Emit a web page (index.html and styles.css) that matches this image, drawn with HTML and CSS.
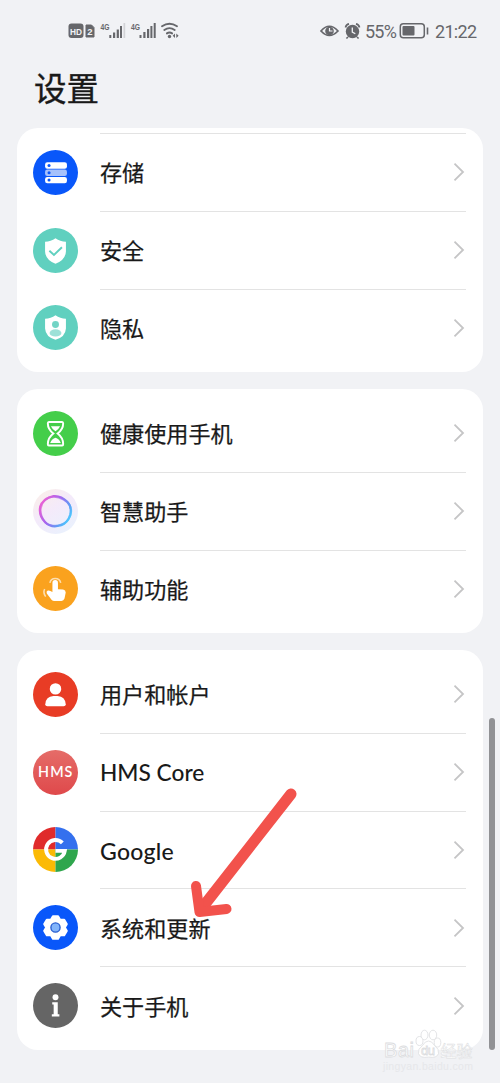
FILE: index.html
```html
<!DOCTYPE html>
<html lang="zh-CN">
<head>
<meta charset="utf-8">
<title>设置</title>
<link rel="stylesheet" href="styles.css">
</head>
<body>
<div class="screen">
  <header class="status">
    <svg class="status-left" width="112" height="22" viewBox="68 20 112 22" fill="#66676b">
      <rect x="68.500" y="23.500" width="15" height="14.500" rx="3"/>
      <text x="70" y="34.500" class="tag" textLength="12" lengthAdjust="spacingAndGlyphs" fill="#f1f2f5">HD</text>
      <path d="M86 25h5.500l2.500 2.500v9.500h-8z" stroke="#66676b" stroke-linejoin="round"/>
      <text x="87.300" y="34.500" class="tag" fill="#f1f2f5">2</text>
      <text x="100.500" y="29.500" class="net" textLength="9" lengthAdjust="spacingAndGlyphs">4G</text>
      <path d="M109.300 35h2v3h-2zM113 32.500h2.200v5.500H113zM116.700 29.500h2.200v8.500h-2.200zM120 26h2v12h-2z"/>
      <path d="M123.500 23h1.700v15h-1.700z" fill="#d2d3d6"/>
      <text x="131" y="29.500" class="net" textLength="9" lengthAdjust="spacingAndGlyphs">4G</text>
      <path d="M139.500 35h2v3h-2zM143.300 32h2.200v6h-2.200zM147 29h2.200v9H147zM150.400 26h2v12h-2zM153.700 23h2v15h-2z"/>
      <g fill="none" stroke="#66676b" stroke-width="1.900" stroke-linecap="round">
        <path d="M162 26.300q7.500-5 15 0M164.300 30q5.200-3.700 10.400 0M166.900 33.400q2.600-1.700 5.200 0"/>
      </g>
      <circle cx="169.500" cy="36.500" r="1.700"/>
      <path d="M175 33.600v4.400l-2.300-2.200zM176.300 33.600v4.400l2.300-2.200z"/>
    </svg>
    <div class="status-right">
      <svg width="42" height="22" viewBox="320 20 42 22" fill="none" stroke="#66676b">
        <path d="M321 31q8.300-9.500 17 0q-8.700 9-17 0z" stroke-width="1.700"/>
        <circle cx="329.500" cy="31" r="4.300" fill="#66676b" stroke="none"/>
        <path d="M329.500 28v3h3" stroke="#f1f2f5" stroke-width="1.200"/>
        <circle cx="352.500" cy="31.500" r="6.700" fill="#66676b" stroke="none"/>
        <path d="M345.500 27.500q.500-3 3.500-3.700M359.500 27.500q-.500-3-3.500-3.700M348 37l-1.600 1.500M357 37l1.600 1.500" stroke-width="1.700"/>
        <path d="M352.300 27.500v4.500l3 1.700" stroke="#f1f2f5" stroke-width="1.300"/>
      </svg>
      <span class="percent">55%</span>
      <svg width="30" height="22" viewBox="399 20 30 22" fill="none" stroke="#66676b">
        <rect x="400.300" y="23.800" width="24" height="14" rx="3" stroke-width="1.500"/>
        <rect x="402.500" y="26" width="12" height="9.600" rx="1" fill="#66676b" stroke="none"/>
        <path d="M427.500 27.500v7" stroke-width="1.600"/>
      </svg>
      <span class="clock">21:22</span>
    </div>
  </header>

  <h1 class="title">设置</h1>

  <main class="groups">
    <section class="card continued">
      <div class="row">
        <svg class="icon" viewBox="0 0 44 44"><circle cx="22" cy="22" r="22" fill="#0957fa"/><rect x="11.800" y="12" width="21.400" height="6.300" rx="2.200" fill="#fff"/><rect x="11.800" y="19" width="21.400" height="6.300" rx="2.200" fill="#a6c1fb"/><rect x="11.800" y="26.300" width="21.400" height="6.300" rx="2.200" fill="#fff"/><g fill="#0957fa"><circle cx="15.700" cy="15.200" r="1.500"/><circle cx="15.700" cy="22.200" r="1.500"/><circle cx="15.700" cy="29.400" r="1.500"/></g></svg>
        <div class="body"><span>存储</span><svg class="chev" viewBox="0 0 12 20"><path d="M1.500 1.700L10 10l-8.500 8.300"/></svg></div>
      </div>
      <div class="row">
        <svg class="icon" viewBox="0 0 44 44"><circle cx="22" cy="22" r="22" fill="#60d0bf"/><path d="M22 10q4.500 3.300 10.200 3.500v9.500q-.500 8.300-10.200 12-9.700-3.700-10.200-12v-9.500q5.700-.200 10.200-3.500z" fill="#fff"/><path d="M16 22.300l4.500 4 7.800-7.500" fill="none" stroke="#60d0bf" stroke-width="1.900"/></svg>
        <div class="body"><span>安全</span><svg class="chev" viewBox="0 0 12 20"><path d="M1.500 1.700L10 10l-8.500 8.300"/></svg></div>
      </div>
      <div class="row">
        <svg class="icon" viewBox="0 0 44 44"><circle cx="22" cy="22" r="22" fill="#60d0bf"/><path d="M22 10q4.500 3.300 10.200 3.500v9.500q-.500 8.300-10.200 11-9.700-2.700-10.200-11v-9.500q5.700-.200 10.200-3.500z" fill="#fff"/><circle cx="22" cy="19" r="3.400" fill="#72d4c5"/><ellipse cx="22" cy="27.300" rx="5.800" ry="3.500" fill="#9de1d8"/></svg>
        <div class="body"><span>隐私</span><svg class="chev" viewBox="0 0 12 20"><path d="M1.500 1.700L10 10l-8.500 8.300"/></svg></div>
      </div>
    </section>

    <section class="card">
      <div class="row">
        <svg class="icon" viewBox="0 0 44 44"><circle cx="22" cy="22" r="22" fill="#44ce4a"/><path d="M15.500 10.700h13q1 0 1 1.500 0 5.600-5.400 9.800 5.400 4.200 5.400 10.300 0 1.500-1 1.500h-13q-1 0-1-1.500 0-6.100 5.400-10.300-5.400-4.200-5.400-9.800 0-1.500 1-1.500z" fill="none" stroke="#fff" stroke-width="1.900"/><path d="M17.500 15h9q-1.500 3.200-4.500 4.800-3-1.600-4.500-4.800zM16.800 31.200q1.700-4.200 5.200-5 3.500.8 5.200 5z" fill="#fff"/></svg>
        <div class="body"><span>健康使用手机</span><svg class="chev" viewBox="0 0 12 20"><path d="M1.500 1.700L10 10l-8.500 8.300"/></svg></div>
      </div>
      <div class="row">
        <svg class="icon" viewBox="0 0 44 44"><defs><linearGradient id="ring" x1="0" y1=".2" x2="1" y2=".75"><stop offset="0" stop-color="#ed61d3"/><stop offset=".42" stop-color="#a765ee"/><stop offset=".75" stop-color="#6199f5"/><stop offset="1" stop-color="#49cfff"/></linearGradient><linearGradient id="halo" x1="0" y1="0" x2=".7" y2="1"><stop stop-color="#fbefe6"/><stop offset=".5" stop-color="#f4eafa"/><stop offset="1" stop-color="#eaf1fd"/></linearGradient></defs><circle cx="22" cy="22" r="22" fill="url(#halo)"/><path d="M20 7C25 6.500 30 9 33.500 12.500C37 16 37.500 20 36.500 25C35 30 32 34 27 35.500C21 37.500 16 36.500 12 32.500C8 28.500 6 23 7 17.500C8.500 12 14 8 20 7z" fill="none" stroke="url(#ring)" stroke-width="2.200"/><path d="M15 8.500C20 7 26 8 30 10.500C35 13.500 37.500 17 37.300 22C37 28 33 33 27.500 35C22 37 14 36 11 31.500C8 27 6.500 21 8.300 16.500C9.500 12 11 10 15 8.500z" fill="none" stroke="url(#ring)" stroke-width="2" opacity=".7"/></svg>
        <div class="body"><span>智慧助手</span><svg class="chev" viewBox="0 0 12 20"><path d="M1.500 1.700L10 10l-8.500 8.300"/></svg></div>
      </div>
      <div class="row">
        <svg class="icon" viewBox="0 0 44 44"><circle cx="22" cy="22" r="22" fill="#faa21e"/><path d="M19 16.500a2.700 2.700 0 0 1 5.400 0v6.200l5 .3q2.600.5 2.600 3l-1.200 5.800q-.8 2.400-3 2.400h-7q-1.500 0-2.700-1.300l-4.600-6q-1-2 1-2.900 1.900-.4 4.500 1.400z" fill="#fff"/><path d="M16.500 16.500a5.400 5.400 0 0 1 10.600 0M11.400 22.500q-1.800 3.500 1 7.500" fill="none" stroke="#fff" stroke-opacity=".65" stroke-width="1.500"/></svg>
        <div class="body"><span>辅助功能</span><svg class="chev" viewBox="0 0 12 20"><path d="M1.500 1.700L10 10l-8.500 8.300"/></svg></div>
      </div>
    </section>

    <section class="card">
      <div class="row">
        <svg class="icon" viewBox="0 0 44 44"><circle cx="22" cy="22" r="22" fill="#e83c25"/><circle cx="22" cy="16.500" r="5.600" fill="#fff"/><path d="M12 31.500q.500-7.500 8-8h4q7.500.500 8 8 0 2-2 2H14q-2 0-2-2z" fill="#fff"/></svg>
        <div class="body"><span>用户和帐户</span><svg class="chev" viewBox="0 0 12 20"><path d="M1.500 1.700L10 10l-8.500 8.300"/></svg></div>
      </div>
      <div class="row">
        <svg class="icon" viewBox="0 0 44 44"><defs><linearGradient id="hms" x2="0" y2="1"><stop stop-color="#e56c68"/><stop offset="1" stop-color="#df494b"/></linearGradient></defs><circle cx="22" cy="22" r="22" fill="url(#hms)"/><text class="hms" x="5" y="26.600" textLength="33.500" fill="#fff">HMS</text></svg>
        <div class="body"><span class="latin core">HMS Core</span><svg class="chev" viewBox="0 0 12 20"><path d="M1.500 1.700L10 10l-8.500 8.300"/></svg></div>
      </div>
      <div class="row">
        <svg class="icon" viewBox="0 0 44 44"><path d="M22 22V0A22 22 0 0 0 0 22z" fill="#e02b2b"/><path d="M22 22h22A22 22 0 0 0 22 0z" fill="#3470ee"/><path d="M22 22H0a22 22 0 0 0 22 22z" fill="#fbba05"/><path d="M22 22v22a22 22 0 0 0 22-22z" fill="#2fa64d"/><path d="M28.700 15.600a9.200 9.200 0 1 0 2.400 7.700H22" fill="none" stroke="#fff" stroke-width="3.800"/></svg>
        <div class="body"><span class="latin google">Google</span><svg class="chev" viewBox="0 0 12 20"><path d="M1.500 1.700L10 10l-8.500 8.300"/></svg></div>
      </div>
      <div class="row">
        <svg class="icon" viewBox="0 0 44 44"><circle cx="22" cy="22" r="22" fill="#0957fa"/><path d="M19.500 11h5l2 3.400 4 0 2.500 4.300-1.900 3.300 1.900 3.300-2.500 4.300-4 0-2 3.400h-5l-2-3.400-4 0-2.500-4.300 1.900-3.300-1.900-3.300 2.500-4.300 4 0z" fill="#fff" stroke="#fff" stroke-width="2" stroke-linejoin="round"/><circle cx="22" cy="22" r="4.500" fill="#82b4fa" stroke="#245bd0" stroke-width="1.300"/></svg>
        <div class="body"><span>系统和更新</span><svg class="chev" viewBox="0 0 12 20"><path d="M1.500 1.700L10 10l-8.500 8.300"/></svg></div>
      </div>
      <div class="row">
        <svg class="icon" viewBox="0 0 44 44"><circle cx="22" cy="22" r="22" fill="#656565"/><circle cx="22" cy="14" r="2.900" fill="#fff"/><path d="M18.800 18.800h5.400v11.700h1.600v2.300h-7.400v-2.300h1.800v-9.400h-1.400z" fill="#fff"/></svg>
        <div class="body"><span>关于手机</span><svg class="chev" viewBox="0 0 12 20"><path d="M1.500 1.700L10 10l-8.500 8.300"/></svg></div>
      </div>
    </section>
  </main>

  <svg class="arrow" width="112" height="136" viewBox="186 786 112 136" fill="none" stroke="#f2524c" stroke-linecap="round" stroke-linejoin="round"><path d="M291 794L202 908" stroke-width="11"/><path d="M196 886l3.500 26 27-3" stroke-width="10"/></svg>
  <div class="scrollbar"></div>
  <svg class="watermark" width="122" height="52" viewBox="378 1026 122 52">
    <g fill="#fff" stroke="#dcdde0" stroke-width=".8">
      <ellipse cx="419.500" cy="1041" rx="3.500" ry="4.500"/><ellipse cx="424.500" cy="1035" rx="3.500" ry="4.800"/><ellipse cx="433" cy="1035" rx="3.700" ry="4.800"/><ellipse cx="437.500" cy="1042.500" rx="3.300" ry="4.500"/>
      <path d="M428.500 1041q3.500 0 6 4.500 5 3.500 4 8-1.500 5-10 3.500-8.500 1.500-10-3.500-1-4.500 4-8 2.500-4.500 6-4.500z"/>
      <text class="brand" x="384" y="1057" textLength="30">Bai</text>
      <text class="brand du" x="421" y="1055" textLength="14">du</text>
      <text class="brand cn" x="440.500" y="1057" textLength="32">经验</text>
    </g>
    <text class="domain" x="383" y="1070" textLength="90">jingyan.baidu.com</text>
  </svg>
</div>
</body>
</html>
```
FILE: styles.css
```css
* { box-sizing: border-box; }
body {
  margin: 0;
  background: #f1f2f5;
  font-family: "Noto Sans CJK SC", sans-serif;
  color: #191919;
}
.screen {
  position: relative;
  width: 500px;
  height: 1083px;
  overflow: hidden;
}
svg { display: block; flex: none; }
.status {
  display: flex;
  justify-content: space-between;
  height: 62px;
  padding: 20px 23px 0 68px;
}
.status-right {
  display: flex;
  height: 22px;
  align-items: center;
  font: 18px/22px Roboto, sans-serif;
  color: #66676b;
}
.percent { width: 34px; margin: 2px 0 0 3px; letter-spacing: -.8px; }
.clock { width: 42px; margin: 2px 0 0 6px; letter-spacing: -.7px; }
.tag { font: bold 9.5px "Liberation Sans", sans-serif; }
.net { font: bold 8.5px "Liberation Sans", sans-serif; }
.title {
  height: 66px;
  margin: 0;
  padding-left: 34px;
  font-size: 32.5px;
  line-height: 50px;
  font-weight: 400;
  -webkit-text-stroke: .35px #191919;
}
.groups {
  display: flex;
  flex-direction: column;
  gap: 17px;
  padding: 0 17px;
}
.card {
  padding: 5px 17px 5.6px 16px;
  border-radius: 21px;
  background: #fff;
}
.row {
  display: flex;
  align-items: center;
  gap: 22px;
  height: 77.8px;
}
.icon { width: 45px; height: 45px; margin-top: 1px; }
.body {
  flex: 1;
  display: flex;
  align-items: center;
  justify-content: space-between;
  height: 100%;
  font-size: 22.1px;
  line-height: 32px;
  border-top: 1px solid #e3e3e3;
}
.body span { padding-bottom: 2px; -webkit-text-stroke: .25px #191919; }
.card:not(.continued) .row:first-child .body { border-top-color: transparent; }
.chev {
  width: 12px;
  height: 20px;
  margin-right: 1px;
  fill: none;
  stroke: #c5c5c6;
  stroke-width: 1.8;
}
.body .latin {
  font-family: Lato, "Noto Sans CJK SC", sans-serif;
  font-weight: 500;
  padding: 2px 0 0;
  -webkit-text-stroke: 0;
}
.core { font-size: 22.7px; }
.google { font-size: 23px; letter-spacing: .25px; }
.hms { font: 600 14px Lato, sans-serif; }
.arrow { position: absolute; left: 186px; top: 786px; }
.scrollbar {
  position: absolute;
  left: 489px;
  top: 718px;
  width: 5.5px;
  height: 332px;
  border-radius: 3px;
  background: #919295;
}
.watermark { position: absolute; left: 378px; top: 1026px; }
.brand { font: 20px "Liberation Sans", sans-serif; }
.du { font-size: 13px; }
.cn { font: 16px "Noto Sans CJK SC", sans-serif; stroke-width: .5; }
.domain { font: 10.5px "Liberation Sans", sans-serif; fill: #e6e7ea; }
```
